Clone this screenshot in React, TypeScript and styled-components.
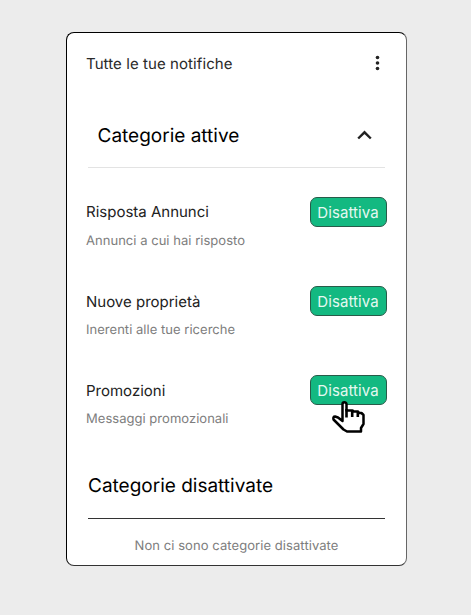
import React from 'react';
import styled, { createGlobalStyle } from 'styled-components';

const GlobalStyle = createGlobalStyle`
  * { box-sizing: border-box; }
  body { margin: 0; background: #ececec; font-family: Inter, "Liberation Sans", sans-serif; text-rendering: geometricPrecision; }
  h1, h2, h3, p { margin: 0; font-weight: 400; white-space: nowrap; }
`;

const Page = styled.main`
  width: 471px;
  height: 615px;
  padding: 32px 0 0 66px;
  background: #ececec;
`;

const Card = styled.section`
  width: 341px;
  height: 534px;
  padding: 0 19px;
  background: #fff;
  border: 1px solid #000;
  border-right-color: #666;
  border-bottom-color: #333;
  border-radius: 8px;
`;

const Header = styled.header`
  display: flex;
  align-items: center;
  justify-content: space-between;
  height: 61px;
`;

const Title = styled.h1`
  font-size: 15px;
  line-height: 20px;
  letter-spacing: 0.08px;
  color: #2a2a2a;
`;

const IconButton = styled.button`
  display: flex;
  padding: 0;
  border: 0;
  background: none;
  cursor: pointer;
`;

const SectionHead = styled.div<{ $tone: string; $height: number; $indent?: number; $drop?: number }>`
  display: flex;
  align-items: center;
  justify-content: space-between;
  height: ${(p) => p.$height}px;
  margin: 0 2px;
  padding: ${(p) => p.$drop ?? 0}px 12px 0 ${(p) => p.$indent ?? 0}px;
  border-bottom: 1px solid ${(p) => p.$tone};
`;

const SectionTitle = styled.h2`
  font-size: 19px;
  line-height: 24px;
  color: #000;
`;

const List = styled.div`
  height: 286px;
  padding-top: 29px;
`;

const Row = styled.article`
  display: flex;
  align-items: flex-start;
  justify-content: space-between;
  height: 89px;
`;

const Name = styled.h3<{ $top: number }>`
  height: 35px;
  padding-top: ${(p) => p.$top}px;
  font-size: 15px;
  line-height: 20px;
  color: #222;
`;

const Note = styled.p`
  font-size: 13px;
  line-height: 18px;
  letter-spacing: 0.03px;
  color: #7d7d7d;
`;

const ButtonWrap = styled.div`
  position: relative;
`;

const Toggle = styled.button`
  display: flex;
  align-items: center;
  justify-content: center;
  width: 77px;
  height: 30px;
  padding: 0 1px 0 0;
  border: 1px solid #285b49;
  border-radius: 7px;
  background: #13b981;
  color: #e5f8f1;
  font-family: inherit;
  font-size: 15px;
  letter-spacing: 0.1px;
  cursor: pointer;
`;

const Pointer = styled.svg`
  position: absolute;
  left: 21px;
  top: 25px;
`;

const Empty = styled.p`
  padding-top: 18px;
  text-align: center;
  font-size: 13px;
  line-height: 18px;
  letter-spacing: 0.07px;
  color: #7d7d7d;
`;

const categories = [
  { name: 'Risposta Annunci', note: 'Annunci a cui hai risposto', top: 5 },
  { name: 'Nuove proprietà', note: 'Inerenti alle tue ricerche', top: 6 },
  { name: 'Promozioni', note: 'Messaggi promozionali', top: 6, hovered: true },
];

const HandPointer = () => (
  <Pointer width="36" height="34" viewBox="0 0 36 34" aria-hidden="true">
    <path
      d="M11.500 20V4Q11.500 2.300 13.300 2.300T15.500 4V10.500H21.500L22.500 11.500H27L28 13H30.500L32.500 15V24L30 28V31.500H16L12.500 29.500L2.500 19.500Q1.800 16.500 4 16.500L7 17.500l4.500 3.500Z"
      fill="#fff" stroke="#000" strokeWidth="2.500" strokeLinejoin="round"
    />
    <path d="M15.500 9v8.500M21.200 10.500v6.500M26.800 12v5" stroke="#000" strokeWidth="2.600" />
  </Pointer>
);

export default function App() {
  return (
    <>
      <GlobalStyle />
      <Page>
        <Card>
          <Header>
            <Title>Tutte le tue notifiche</Title>
            <IconButton aria-label="Menu">
              <svg width="18" height="18" viewBox="0 0 18 18" fill="#222">
                <circle cx="8.500" cy="2.500" r="1.800" />
                <circle cx="8.500" cy="8" r="1.800" />
                <circle cx="8.500" cy="13.500" r="1.800" />
              </svg>
            </IconButton>
          </Header>
          <SectionHead $tone="#e3e3e3" $height={74} $indent={9.5} $drop={11}>
            <SectionTitle>Categorie attive</SectionTitle>
            <IconButton aria-label="Comprimi">
              <svg width="18" height="18" viewBox="0 0 18 18" fill="none" stroke="#222" strokeWidth="2.400">
                <path d="m3.200 11.500 6.300-6.200 6.300 6.200" />
              </svg>
            </IconButton>
          </SectionHead>
          <List>
            {categories.map((c) => (
              <Row key={c.name}>
                <div>
                  <Name $top={c.top}>{c.name}</Name>
                  <Note>{c.note}</Note>
                </div>
                <ButtonWrap>
                  <Toggle>Disattiva</Toggle>
                  {c.hovered && <HandPointer />}
                </ButtonWrap>
              </Row>
            ))}
          </List>
          <SectionHead $tone="#333" $height={65}>
            <SectionTitle>Categorie disattivate</SectionTitle>
          </SectionHead>
          <Empty>Non ci sono categorie disattivate</Empty>
        </Card>
      </Page>
    </>
  );
}
